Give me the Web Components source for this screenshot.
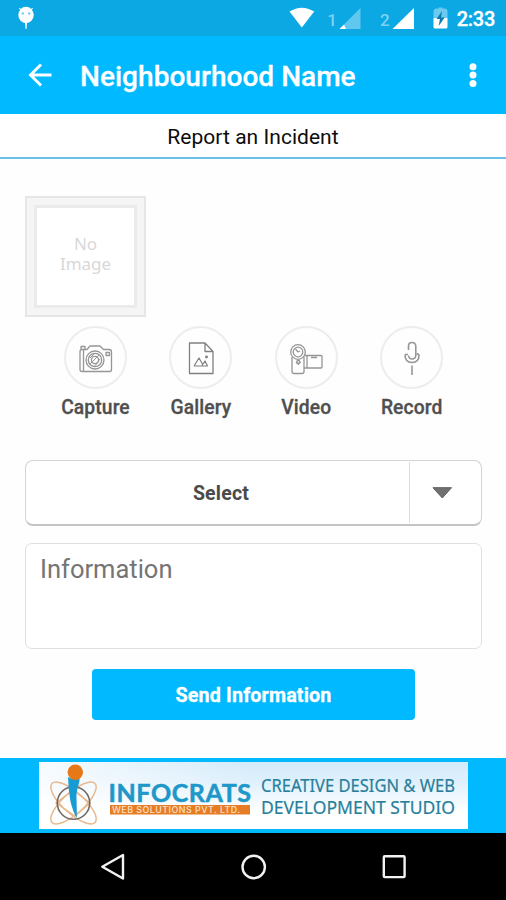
<!DOCTYPE html>
<html lang="en">
<head>
<meta charset="utf-8">
<title>Report an Incident</title>
<style>
  html, body { margin: 0; height: 100%; background: #fefefe; }
  body { font-family: Roboto, "Liberation Sans", sans-serif; overflow: hidden; }
</style>
</head>
<body>
<incident-screen></incident-screen>
<script>
const define = (name, markup) => customElements.define(name, class extends HTMLElement {
  constructor() {
    super();
    const t = document.createElement('template');
    t.innerHTML = markup;
    this.attachShadow({ mode: 'open' }).append(t.content.cloneNode(true));
  }
});

define('status-bar', `
<style>
  :host { display: flex; height: 36px; background: #0ba8e4; color: #fff; box-sizing: border-box; justify-content: space-between; }
  svg { display: block; }
  .right { display: flex; align-items: center; padding-right: 11px; }
  .sim { font-size: 17px; line-height: 36px; padding-top: 4px; color: #7fd2f2; font-weight: 500; }
  .time { font-size: 20px; font-weight: 500; line-height: 36px; padding-top: 2px; letter-spacing: -.25px; -webkit-text-stroke: .3px #fff; }
</style>
<svg width="50" height="36">
  <g fill="#fff"><path d="M18.300 15a7.700 8.200 0 0 1 15.400 0a7.700 8.200 0 0 1-15.400 0z"/><path d="M25 22h2l-.4 7h-1z"/></g>
  <path d="M19.500 8l2 3M32.500 8l-2 3" stroke="#fff" stroke-width="1.200"/>
  <circle cx="22.800" cy="13.500" r="1.200" fill="#72cdef"/><circle cx="29.200" cy="13.500" r="1.200" fill="#72cdef"/>
</svg>
<div class="right">
  <svg width="38" height="36"><path d="M.5 11.600Q12.800 3.700 25.200 11.600L12.800 27.500z" fill="#fff"/></svg>
  <span class="sim">1</span>
  <svg width="43" height="36"><path d="M23.500 8v21H2.500z" fill="#60c8ef"/><path d="M2.500 29l4.500-4.500 2 4.500z" fill="#fff"/></svg>
  <span class="sim">2</span>
  <svg width="41" height="36"><path d="M24 8v21H2.500z" fill="#fff"/></svg>
  <svg width="26" height="36"><path d="M5.500 8.500h2V7.500h4v1h2q3 .2 3 3V18H2.500v-6.500q0-3 3-3z" fill="#6ccaf0"/><path d="M2.500 18h14v9q0 1.500-1.500 1.500H4Q2.500 28.500 2.500 27z" fill="#fff"/><path d="M11 11L5.500 19h3.400l-1.200 7 6-8.500h-3.700z" fill="#0b7dac"/></svg>
  <span class="time">2:33</span>
</div>`);

define('app-bar', `
<style>
  :host { display: flex; align-items: center; height: 78px; background: #00b9ff; color: #fff; box-sizing: border-box; }
  .title { flex: 1; font-size: 28px; font-weight: 500; line-height: 36px; padding: 4px 0 0 1px; white-space: nowrap; letter-spacing: .04px; -webkit-text-stroke: .3px #fff; }
  svg { display: block; flex: none; }
</style>
<svg width="79" height="78"><path d="M51.500 39H31M41 28.500L30.500 39 41 49.500" fill="none" stroke="#fff" stroke-width="2.900"/></svg>
<span class="title"><slot></slot></span>
<svg width="66" height="78"><g fill="#fff"><circle cx="33" cy="30.700" r="3.500"/><circle cx="33" cy="39" r="3.500"/><circle cx="33" cy="47.500" r="3.500"/></g></svg>`);

define('page-heading', `
<style>
  :host { display: block; height: 45px; box-sizing: border-box; border-bottom: 2px solid #6bc0e8; text-align: center; color: #0c0c0c; font-size: 21px; line-height: 46px; letter-spacing: .04px; background: #fff; }
</style><slot></slot>`);

define('image-placeholder', `
<style>
  :host { display: flex; width: 121px; height: 121px; box-sizing: border-box; padding: 7px; background: #f5f5f5; border: 2px solid #e6e6e6; }
  .mat { flex: 1; box-sizing: border-box; border: 3px solid #ebebeb; background: #fff; display: flex; align-items: center; justify-content: center; text-align: center;
    font: 17px/20.500px "Noto Sans", sans-serif; color: #d8d8d8; padding-bottom: 5px; }
</style><div class="mat"><slot></slot></div>`);

define('media-action', `
<style>
  :host { display: flex; flex-direction: column; align-items: center; width: 105.400px; }
  .ring { width: 63px; height: 63px; box-sizing: border-box; border: 2.500px solid #ededed; border-radius: 50%; display: flex; align-items: center; justify-content: center; }
  ::slotted(svg) { flex: none; fill: none; stroke: #969696; stroke-width: 1.300; stroke-linejoin: round; }
  .label { font-size: 19.300px; font-weight: 500; line-height: 24px; margin-top: 7px; color: #4f4f4f; letter-spacing: .1px; -webkit-text-stroke: .3px #4f4f4f; }
</style>
<div class="ring"><slot name="icon"></slot></div>
<div class="label"><slot></slot></div>`);

define('select-box', `
<style>
  :host { display: flex; height: 66px; box-sizing: border-box; border: 1.500px solid #d4d4d4; border-bottom: 2px solid #c4c4c4; border-radius: 8px; background: #fff; }
  .value { flex: 1; text-align: center; padding-left: 7px; font-size: 19.500px; font-weight: 700; line-height: 65px; color: #4a4a4a; letter-spacing: .2px; }
  .arrow { width: 71px; margin: 1px 0; border-left: 1.500px solid #dedede; display: flex; }
</style>
<div class="value"><slot></slot></div>
<div class="arrow"><svg width="68" height="60"><path d="M23 25.700h18.500L32.300 36z" fill="#707070" stroke="#5f5f5f" stroke-width="1" stroke-linejoin="round"/></svg></div>`);

define('info-field', `
<style>
  :host { display: block; height: 106px; box-sizing: border-box; border: 1.500px solid #e0e0e0; border-radius: 7px; background: #fff; padding: 9px 14px; font-size: 25.500px; line-height: 32px; color: #757575; }
</style><slot></slot>`);

define('send-button', `
<style>
  :host { display: block; width: 323px; height: 51px; border-radius: 4px; background: #00b9ff; color: #fff; text-align: center; font-size: 19.700px; font-weight: 700; line-height: 54px; letter-spacing: .15px; -webkit-text-stroke: .3px #fff; }
</style><slot></slot>`);

define('sponsor-banner', `
<style>
  :host { display: flex; justify-content: center; height: 75px; box-sizing: border-box; padding: 4px 0; background: #00b9ff; }
  svg { display: block; overflow: visible; }
</style>
<svg width="429" height="67" viewBox="39 762 429 67">
  <defs>
    <linearGradient id="sky" x1="0" y1="0" x2="0" y2="1"><stop offset="0" stop-color="#d3ebfa"/><stop offset=".3" stop-color="#dff0fc"/><stop offset=".75" stop-color="#fff"/></linearGradient>
    <linearGradient id="side"><stop offset="0" stop-color="#fff" stop-opacity=".8"/><stop offset=".5" stop-color="#fff" stop-opacity="0"/></linearGradient>
  </defs>
  <rect x="39" y="762" width="429" height="67" fill="url(#sky)"/>
  <rect x="39" y="762" width="429" height="67" fill="url(#side)"/>
  <g fill="none" stroke="#e9b98f" stroke-width="1.500">
    <ellipse cx="73.500" cy="803" rx="29" ry="10.500" transform="rotate(42 73.500 803)"/>
    <ellipse cx="73.500" cy="803" rx="29" ry="10.500" transform="rotate(-42 73.500 803)"/>
    <path d="M56 803L73 790 90 803 75 816z"/>
  </g>
  <circle cx="73.500" cy="803" r="16.200" fill="none" stroke="#6f6964" stroke-width="1.600"/>
  <path d="M68 777q6 4 11.500 0 .5 3-1 8-2.500 8-2 14 .3 9 .4 19-4-6-6.500-17-2-11-2.400-24z" fill="#179bd3"/>
  <circle cx="75.300" cy="772.200" r="7.700" fill="#e67817"/>
  <text x="108.500" y="801.500" font-family="Lato, sans-serif" font-size="25" font-weight="700" fill="#2097c9" stroke="#2097c9" stroke-width=".5" textLength="142.500" lengthAdjust="spacing">INFOCRATS</text>
  <rect x="110" y="805" width="140" height="9.500" fill="#e67d25"/>
  <text x="112" y="813" font-family="Inter, sans-serif" font-size="8.800" font-weight="500" fill="#fbe0c5" textLength="128">WEB SOLUTIONS PVT. LTD.</text>
  <g font-family="'Noto Sans', sans-serif" font-size="18.500" fill="#287f9b" stroke="#287f9b" stroke-width=".2">
    <text x="261" y="791.500" textLength="194" lengthAdjust="spacingAndGlyphs">CREATIVE DESIGN &amp; WEB</text>
    <text x="261" y="814" textLength="194" lengthAdjust="spacingAndGlyphs">DEVELOPMENT STUDIO</text>
  </g>
</svg>`);

define('nav-bar', `
<style>
  :host { display: flex; justify-content: center; gap: 101px; height: 67px; background: #000; }
  svg { display: block; fill: none; stroke: #f2f2f2; stroke-width: 2.400; stroke-linejoin: round; }
</style>
<svg width="40" height="67"><path d="M31 22v23.500L10.300 33.700z"/></svg>
<svg width="40" height="67"><circle cx="20.700" cy="34" r="11.200"/></svg>
<svg width="40" height="67"><rect x="9.800" y="23.300" width="20.800" height="20.800" rx="1"/></svg>`);

define('incident-screen', `
<style>
  :host { display: flex; flex-direction: column; width: 506px; height: 900px; background: #fefefe; }
  main { flex: 1; display: flex; flex-direction: column; padding: 37px 24px 0 25px; }
  .media { display: flex; margin: 9px 0 0 17.800px; }
  select-box { margin-top: 40px; }
  info-field { margin-top: 17px; }
  send-button { align-self: center; margin-top: 20px; }
</style>
<status-bar></status-bar>
<app-bar>Neighbourhood Name</app-bar>
<page-heading>Report an Incident</page-heading>
<main>
  <image-placeholder>No<br>Image</image-placeholder>
  <div class="media">
    <media-action>
      <svg slot="icon" width="64" height="64">
        <path d="M17 25.500q0-2 2-2h5l3-3.500h10l3.500 3.500H46q2.500 0 2.500 2.500v17.500q0 2-2 2H19q-2 0-2-2zM20.500 24v21M18 23v-2.500h4V23M43 26.500h3.500v3H43z"/>
        <circle cx="32" cy="34" r="9"/><circle cx="32" cy="34" r="6.700"/><circle cx="32" cy="34" r="3.600"/>
        <path d="M27 38l9-9M31 40.500l3-3M27 32l4-4M37 33l-4 5" stroke-width="1"/>
      </svg>Capture</media-action>
    <media-action>
      <svg slot="icon" width="64" height="64" style="stroke:#808080">
        <path d="M20.500 17H36l8 8.500V47.500H20.500zM36 17v8.500h8"/>
        <path d="M25 40l5-8 3.500 6M25 40h13.500l-2.500-5-3 4.500" stroke-width="1.200"/><circle cx="37.500" cy="31" r=".8" fill="#777"/>
      </svg>Gallery</media-action>
    <media-action>
      <svg slot="icon" width="64" height="64">
        <circle cx="24" cy="26" r="7.300"/><circle cx="24" cy="26" r="4.800"/><path d="M24 26l-2.500-3M24 26l2-1"/>
        <path d="M18 31v14.500q0 2 2 2h8q2 0 2-2V31M22 36l2.300 2.300L26.500 36M30 29.500h17q1 0 1 1V41q0 1-1 1H30M33 30v12M37 31.500h6"/><circle cx="24.300" cy="36" r="1.500"/>
      </svg>Video</media-action>
    <media-action>
      <svg slot="icon" width="64" height="64">
        <path d="M28.500 24v-4q0-3.500 3.500-3.500t3.800 3.500v9q0 4-3.800 4-3 0-3.500-3.500M25 28.500q0 8 7 8t7-7.500l-2-1.500M25 28.500h3M32 39.500v9.500" stroke-width="1.600"/>
      </svg>Record</media-action>
  </div>
  <select-box>Select</select-box>
  <info-field>Information</info-field>
  <send-button>Send Information</send-button>
</main>
<sponsor-banner></sponsor-banner>
<nav-bar></nav-bar>`);
</script>
</body>
</html>
